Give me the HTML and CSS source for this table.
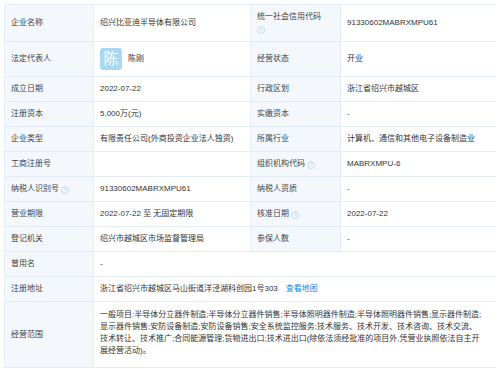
FILE: index.html
```html
<!DOCTYPE html>
<html lang="zh-CN">
<head>
  <meta charset="UTF-8" />
  <meta name="viewport" content="width=device-width, initial-scale=1.0" />
  <title>工商信息</title>
  <link rel="stylesheet" href="styles.css">
</head>
<body>
  <table class="info-table">
    <colgroup>
      <col class="col-label">
      <col class="col-value">
      <col class="col-label2">
      <col class="col-value2">
    </colgroup>
    <tr>
      <td class="label">企业名称</td>
      <td>绍兴比亚迪半导体有限公司</td>
      <td class="label">统一社会信用代码<br><span class="tip">?</span></td>
      <td>91330602MABRXMPU61</td>
    </tr>
    <tr>
      <td class="label">法定代表人</td>
      <td>
        <div class="person">
          <span class="avatar">陈</span>
          <span>陈刚</span>
        </div>
      </td>
      <td class="label">经营状态</td>
      <td>开业</td>
    </tr>
    <tr>
      <td class="label">成立日期</td>
      <td>2022-07-22</td>
      <td class="label">行政区划</td>
      <td>浙江省绍兴市越城区</td>
    </tr>
    <tr>
      <td class="label">注册资本</td>
      <td>5,000万(元)</td>
      <td class="label">实缴资本</td>
      <td>-</td>
    </tr>
    <tr>
      <td class="label">企业类型</td>
      <td>有限责任公司(外商投资企业法人独资)</td>
      <td class="label">所属行业</td>
      <td>计算机、通信和其他电子设备制造业</td>
    </tr>
    <tr>
      <td class="label">工商注册号</td>
      <td></td>
      <td class="label">组织机构代码 <span class="tip">?</span></td>
      <td>MABRXMPU-6</td>
    </tr>
    <tr>
      <td class="label">纳税人识别号 <span class="tip">?</span></td>
      <td>91330602MABRXMPU61</td>
      <td class="label">纳税人资质</td>
      <td>-</td>
    </tr>
    <tr>
      <td class="label">营业期限</td>
      <td>2022-07-22 至 无固定期限</td>
      <td class="label">核准日期 <span class="tip">?</span></td>
      <td>2022-07-22</td>
    </tr>
    <tr>
      <td class="label">登记机关</td>
      <td>绍兴市越城区市场监督管理局</td>
      <td class="label">参保人数</td>
      <td>-</td>
    </tr>
    <tr>
      <td class="label">曾用名</td>
      <td colspan="3">-</td>
    </tr>
    <tr>
      <td class="label">注册地址</td>
      <td colspan="3">浙江省绍兴市越城区马山街道洋泾湖科创园1号303<a class="map-link" href="#">查看地图</a></td>
    </tr>
    <tr>
      <td class="label">经营范围</td>
      <td colspan="3" class="scope">一般项目:半导体分立器件制造;半导体分立器件销售;半导体照明器件制造;半导体照明器件销售;显示器件制造;显示器件销售;安防设备制造;安防设备销售;安全系统监控服务;技术服务、技术开发、技术咨询、技术交流、技术转让、技术推广;合同能源管理;货物进出口;技术进出口(除依法须经批准的项目外,凭营业执照依法自主开展经营活动)。</td>
    </tr>
  </table>
</body>
</html>
```

FILE: styles.css
```css
body {
  margin: 4px;
  background: #fff;
  font-family: 'Liberation Sans', 'Noto Sans CJK SC', sans-serif;
  font-size: 8px;
  line-height: 12px;
  color: #333;
}
.info-table {
  width: 492px;
  border-collapse: collapse;
  table-layout: fixed;
}
.col-label {
  width: 89px;
}
.col-value {
  width: 157px;
}
.col-label2 {
  width: 90px;
}
.col-value2 {
  width: 156px;
}
.info-table td {
  border: 1px solid #e4ecf7;
  padding: 6px 6px;
  vertical-align: middle;
  word-break: break-all;
}
.info-table td.label {
  background: #f4f8fd;
  color: #444;
}
.tip {
  display: inline-block;
  width: 6px;
  height: 6px;
  border: 1px solid #c9dbef;
  border-radius: 50%;
  color: #b9cfe9;
  font-size: 5px;
  line-height: 6px;
  text-align: center;
  vertical-align: -1px;
}
.person {
  display: flex;
  align-items: center;
  gap: 6px;
}
.avatar {
  width: 22px;
  height: 22px;
  border-radius: 3px;
  background: #a9d8f3;
  color: #fff;
  font-size: 15px;
  line-height: 22px;
  text-align: center;
}
.map-link {
  color: #128bed;
  text-decoration: none;
  margin-left: 8px;
}
.info-table td.scope {
  padding: 7px 13px 10px 6px;
}
```
